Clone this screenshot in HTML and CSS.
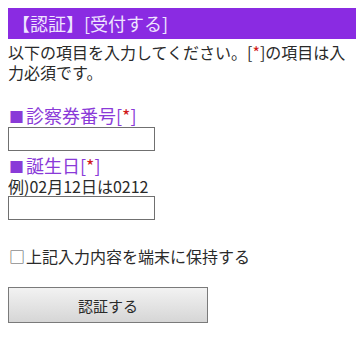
FILE: index.html
```html
<html>

<head>
	<meta charset="utf-8">
	<title>認証</title>
	<link rel="stylesheet" href="styles.css">
</head>

<body>
	<h1 class="titlebar">【認証】[受付する]</h1>
	<p class="intro">以下の項目を入力してください。[<span class="req">*</span>]の項目は入力必須です。</p>

	<div class="field first">
		<div class="label"><span class="mark">■</span>診察券番号[<span class="req">*</span>]</div>
		<input type="text" class="textbox" />
	</div>

	<div class="field second">
		<div class="label"><span class="mark">■</span>誕生日[<span class="req">*</span>]</div>
		<div class="hint">例)02月12日は0212</div>
		<input type="text" class="textbox" />
	</div>

	<div class="keep"><span class="box">□</span>上記入力内容を端末に保持する</div>

	<div class="buttons">
		<button type="button" class="submit">認証する</button>
	</div>
</body>
</html>
```

FILE: styles.css
```css
body {
	margin: 8px;
	background-color: #ffffff;
	color: #2a2a2a;
	font-family: "Noto Sans CJK JP", "DejaVu Sans", sans-serif;
	font-size: 16px;
	line-height: 20px;
}

h1.titlebar {
	margin: 0;
	height: 31px;
	padding-left: 4px;
	background-color: #8a2be2;
	color: #efe4ff;
	font-size: 18px;
	font-weight: normal;
	line-height: 31px;
}

p.intro {
	margin: 3px 0 0 0;
	height: 40px;
}

.req {
	color: #d01818;
}

.field {
	display: flex;
	flex-direction: column;
	align-items: flex-start;
}

.field.first {
	margin-top: 22px;
}

.field.second {
	margin-top: 3px;
}

.label {
	height: 22px;
	color: #8a3ad8;
	font-size: 18px;
	line-height: 22px;
}

.label .mark {
	font-size: 15px;
	line-height: 15px;
	margin-left: 1px;
	margin-right: 2px;
}

.textbox {
	box-sizing: border-box;
	width: 147px;
	height: 24px;
	margin: 0;
	border: 1px solid #707070;
	font-size: 14px;
}

.field .label + .textbox {
	margin-top: 1px;
}

.hint {
	height: 20px;
	line-height: 20px;
}

.keep {
	height: 20px;
	margin-top: 26px;
	line-height: 20px;
}

.keep .box {
	color: #555555;
	margin-left: 1px;
	margin-right: 1px;
}

.buttons {
	margin-top: 21px;
}

button.submit {
	display: block;
	width: 200px;
	height: 36px;
	border: 1px solid #7a7a7a;
	background: linear-gradient(#f2f2f2, #d6d6d6);
	color: #2a2a2a;
	font-family: "Noto Sans CJK JP", "DejaVu Sans", sans-serif;
	font-size: 15px;
	padding: 0;
}
```
